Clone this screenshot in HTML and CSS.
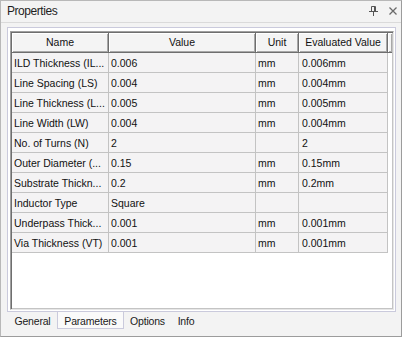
FILE: index.html
```html
<!DOCTYPE html>
<html>
<head>
<meta charset="utf-8">
<link rel="stylesheet" href="styles.css">
</head>
<body>
<div class="window">
  <div class="titlebar">
    <span class="title">Properties</span>
    <div class="tools">
      <svg class="pin" width="9" height="10" viewBox="0 0 9 10">
        <path d="M2.5 0.5 H6.5 V5.5 M2.5 0.5 V5.5 M5.5 0.5 V5.5" fill="none" stroke="#555" stroke-width="1"/>
        <path d="M0 5.5 H9" stroke="#555" stroke-width="1"/>
        <path d="M4.5 5.5 V10" stroke="#555" stroke-width="1"/>
      </svg>
      <svg class="close" width="8" height="8" viewBox="0 0 8 8">
        <path d="M0.5 0.5 L7.5 7.5 M7.5 0.5 L0.5 7.5" stroke="#6a6a6a" stroke-width="1.3"/>
      </svg>
    </div>
  </div>
  <div class="content">
    <div class="tabpanel">
      <div class="grid">
        <div class="hdr">
          <div class="hc">Name</div>
          <div class="hc">Value</div>
          <div class="hc">Unit</div>
          <div class="hc">Evaluated Value</div>
          <div class="hc filler"></div>
        </div>
        <div class="row"><div class="c">ILD Thickness (IL...</div><div class="c">0.006</div><div class="c">mm</div><div class="c">0.006mm</div></div>
        <div class="row"><div class="c">Line Spacing (LS)</div><div class="c">0.004</div><div class="c">mm</div><div class="c">0.004mm</div></div>
        <div class="row"><div class="c">Line Thickness (L...</div><div class="c">0.005</div><div class="c">mm</div><div class="c">0.005mm</div></div>
        <div class="row"><div class="c">Line Width (LW)</div><div class="c">0.004</div><div class="c">mm</div><div class="c">0.004mm</div></div>
        <div class="row"><div class="c">No. of Turns (N)</div><div class="c">2</div><div class="c"></div><div class="c">2</div></div>
        <div class="row"><div class="c">Outer Diameter (...</div><div class="c">0.15</div><div class="c">mm</div><div class="c">0.15mm</div></div>
        <div class="row"><div class="c">Substrate Thickn...</div><div class="c">0.2</div><div class="c">mm</div><div class="c">0.2mm</div></div>
        <div class="row"><div class="c">Inductor Type</div><div class="c">Square</div><div class="c"></div><div class="c"></div></div>
        <div class="row"><div class="c">Underpass Thick...</div><div class="c">0.001</div><div class="c">mm</div><div class="c">0.001mm</div></div>
        <div class="row"><div class="c">Via Thickness (VT)</div><div class="c">0.001</div><div class="c">mm</div><div class="c">0.001mm</div></div>
      </div>
    </div>
    <div class="tabs">
      <div class="tab t1">General</div>
      <div class="tab t2 active">Parameters</div>
      <div class="tab t3">Options</div>
      <div class="tab t4">Info</div>
    </div>
  </div>
</div>
</body>
</html>
```
FILE: styles.css
```css
* { box-sizing: border-box; }
html, body { margin: 0; padding: 0; background: #ffffff; }
body { font-family: "Liberation Sans", Arial, sans-serif; color: #1a1a1a; }

.window {
  width: 402px;
  height: 337px;
  background: #f3f3f3;
  border: 1px solid #b8b8b8;
  border-right-color: #9c9c9c;
  border-bottom-color: #9c9c9c;
  display: flex;
  flex-direction: column;
}

.titlebar {
  height: 22px;
  flex: none;
  border-bottom: 1px solid #dadada;
  display: flex;
  align-items: center;
  justify-content: space-between;
  padding: 0 4px 1px 6px;
}
.title { font-size: 12px; letter-spacing: -0.45px; color: #1e1e1e; }
.tools { display: flex; align-items: center; gap: 11px; }
.pin { display: block; margin-top: -1px; }
.close { display: block; }

.content {
  flex: 1;
  padding: 4px 5px 0 6px;
  display: flex;
  flex-direction: column;
}

.tabpanel {
  height: 285px;
  flex: none;
  background: #ffffff;
  border: 1px solid #cacadc;
  padding: 3px 1px 1px 2px;
  display: flex;
}

.grid {
  flex: 1;
  border: 1px solid;
  border-color: #a0a0a0 #e6e6e6 #e6e6e6 #a0a0a0;
  box-shadow: inset 1px 1px 0 #6e6e6e, inset -1px -1px 0 #c4c4c4;
  padding: 1px;
  background: #ffffff;
  font-size: 10.5px;
}

.hdr, .row {
  display: grid;
  grid-template-columns: 97px 147px 43px 89px 1fr;
  height: 20px;
}

.hc {
  background: #f4f4f4;
  border-right: 1px solid #6e6e6e;
  border-bottom: 1px solid #6e6e6e;
  box-shadow: inset 1px 1px 0 #ffffff, inset -1px -1px 0 #a8a8a8;
  display: flex;
  align-items: center;
  justify-content: center;
  color: #111;
  padding-bottom: 1px;
}
.hc.filler { border-right: none; }

.row .c {
  background: #f4f3f4;
  border-right: 1px solid #c3c3c3;
  border-bottom: 1px solid #c3c3c3;
  display: flex;
  align-items: center;
  padding-left: 2px;
  white-space: nowrap;
  overflow: hidden;
  color: #111;
}
.row .c:nth-child(4) { padding-left: 3px; }

.tabs {
  display: flex;
  height: 17px;
  padding-left: 1px;
  font-size: 10.5px;
  letter-spacing: -0.2px;
}
.tab {
  display: flex;
  align-items: center;
  justify-content: center;
  color: #1a1a1a;
  padding-top: 1px;
}
.t1 { width: 49px; }
.t2 { width: 67px; }
.t3 { width: 47px; }
.t4 { width: 30px; }
.tab.active {
  background: #fafafa;
  border: 1px solid #cacadc;
  border-top: none;
}
```
